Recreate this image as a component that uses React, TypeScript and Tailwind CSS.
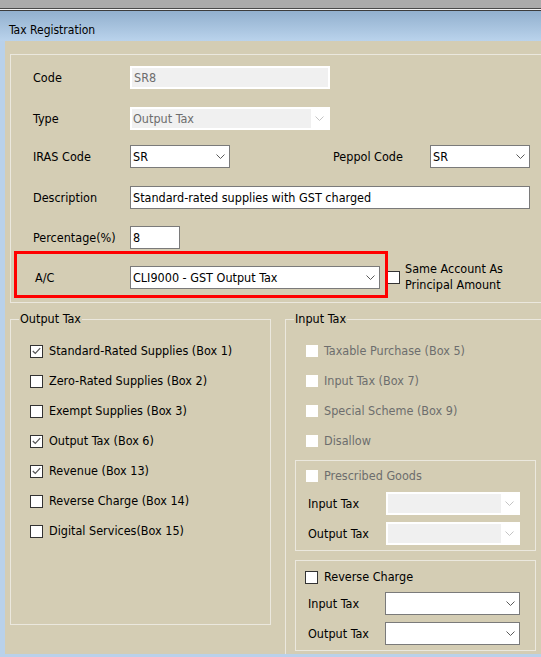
import React from "react";

const tan = "bg-[#d4cdb4]";

function Chevron({ light = false }: { light?: boolean }) {
  return (
    <svg width="9" height="5" viewBox="0 0 9 5" className="block">
      <polyline
        points="0.5,0.5 4.5,4.5 8.5,0.5"
        fill="none"
        stroke={light ? "#c4c4c4" : "#5a5a5a"}
        strokeWidth="1"
      />
    </svg>
  );
}

function Select({ value = "", w, disabled = false }: { value?: string; w: string; disabled?: boolean }) {
  if (disabled) {
    return (
      <div className={`${w} shrink-0 h-[23px] bg-white p-[2px] flex`}>
        <div className="flex-1 bg-[#f0f0f0] pl-[1px] flex items-center text-[#6d6d6d]">{value}</div>
        <div className="w-[17px] flex items-center justify-center">
          <Chevron light />
        </div>
      </div>
    );
  }
  return (
    <div className={`${w} shrink-0 h-[23px] bg-white border border-[#7a7a7a] flex items-center`}>
      <div className="flex-1 pl-[2px] text-black">{value}</div>
      <div className="w-[18px] flex items-center justify-center">
        <Chevron />
      </div>
    </div>
  );
}

function TextBox({ value, w, disabled = false }: { value: string; w: string; disabled?: boolean }) {
  return (
    <div
      className={`${w} shrink-0 h-[23px] flex items-center pl-[2px] ${
        disabled ? "bg-[#f0f0f0] border-2 border-white text-[#6d6d6d]" : "bg-white border border-[#7a7a7a] text-black"
      }`}
    >
      {value}
    </div>
  );
}

function Check({ checked = false, disabled = false }: { checked?: boolean; disabled?: boolean }) {
  if (disabled) return <div className="w-[12px] h-[12px] shrink-0 bg-white mr-[6px]" />;
  return (
    <div className="w-[13px] h-[13px] shrink-0 border border-[#333333] bg-white mr-[6px] flex items-center justify-center">
      {checked && (
        <svg width="9" height="8" viewBox="0 0 9 8">
          <polyline points="0.8,4 3.3,6.5 8.2,1.2" fill="none" stroke="#555555" strokeWidth="1.2" />
        </svg>
      )}
    </div>
  );
}

function CheckRow({ label, checked = false, disabled = false }: { label: string; checked?: boolean; disabled?: boolean }) {
  return (
    <div className="h-[30px] flex items-center whitespace-nowrap">
      <Check checked={checked} disabled={disabled} />
      <span className={disabled ? "text-[#6d6d6d]" : "text-black"}>{label}</span>
    </div>
  );
}

function Row({ label, mt, children }: { label: string; mt: string; children: React.ReactNode }) {
  return (
    <div className={`${mt} h-[23px] flex items-center`}>
      <div className="w-[97px] shrink-0">{label}</div>
      {children}
    </div>
  );
}

export default function App() {
  return (
    <div className="w-[541px] h-[657px] overflow-hidden flex flex-col bg-[#b9d1ea] font-['DejaVu_Sans_Condensed','DejaVu_Sans',sans-serif] text-[12.5px] leading-[16px] text-black">
      {/* window chrome */}
      <div className="h-[8px] shrink-0 bg-[#ababab]" />
      <div className="h-[1px] shrink-0 bg-[#4a4a4a]" />
      <div className="h-[1px] shrink-0 bg-[#f4f4f4]" />
      <div className="h-[1px] shrink-0 bg-[#3c3c3c]" />
      <div className="h-[30px] shrink-0 bg-gradient-to-b from-[#92b0ce] to-[#bad3ec] pl-[9px] pt-[11px] text-[12px]">
        Tax Registration
      </div>

      {/* body */}
      <div className={`h-[613px] shrink-0 ml-[5px] ${tan} overflow-hidden pt-[13px] pl-[5px]`}>
        {/* top frame */}
        <div className="w-[560px] h-[249px] border border-[#ebe8de] pl-[22px]">
          <Row label="Code" mt="mt-[11px]">
            <TextBox value="SR8" w="w-[200px]" disabled />
          </Row>
          <Row label="Type" mt="mt-[18px]">
            <Select value="Output Tax" w="w-[200px]" disabled />
          </Row>
          <Row label="IRAS Code" mt="mt-[15px]">
            <Select value="SR" w="w-[100px]" />
            <div className="ml-[103px] w-[97px] shrink-0">Peppol Code</div>
            <Select value="SR" w="w-[100px]" />
          </Row>
          <Row label="Description" mt="mt-[18px]">
            <TextBox value="Standard-rated supplies with GST charged" w="w-[400px]" />
          </Row>
          <Row label="Percentage(%)" mt="mt-[17px]">
            <TextBox value="8" w="w-[50px]" />
          </Row>
          <div className="mt-[2px] flex items-start">
            <div className="relative z-10 shrink-0 -ml-[19px] w-[374px] h-[47px] border-[3px] border-[#ff0000] pt-[12px] pl-[18px] flex items-start">
              <div className="w-[95px] shrink-0 h-[23px] flex items-center">A/C</div>
              <Select value="CLI9000 - GST Output Tax" w="w-[250px]" />
            </div>
            <div className="mt-[10px] -ml-[1px] flex items-center shrink-0">
              <div className="w-[13px] h-[13px] shrink-0 border border-[#333333] bg-white mr-[5px]" />
              <div className="leading-[16px] whitespace-nowrap">
                Same Account As
                <br />
                Principal Amount
              </div>
            </div>
          </div>
        </div>

        {/* lower group boxes */}
        <div className="mt-[16px] flex items-start">
          <div className="relative shrink-0 w-[261px] h-[306px] border border-[#ebe8de] pt-[16px] pl-[19px]">
            <span className={`absolute -top-[9px] left-[8px] px-[1px] ${tan}`}>Output Tax</span>
            <CheckRow label="Standard-Rated Supplies (Box 1)" checked />
            <CheckRow label="Zero-Rated Supplies (Box 2)" />
            <CheckRow label="Exempt Supplies (Box 3)" />
            <CheckRow label="Output Tax (Box 6)" checked />
            <CheckRow label="Revenue (Box 13)" checked />
            <CheckRow label="Reverse Charge (Box 14)" />
            <CheckRow label="Digital Services(Box 15)" />
          </div>

          <div className="relative shrink-0 ml-[14px] w-[270px] h-[360px] border border-[#ebe8de] pt-[16px]">
            <span className={`absolute -top-[9px] left-[8px] px-[1px] ${tan}`}>Input Tax</span>
            <div className="pl-[20px]">
              <CheckRow label="Taxable Purchase (Box 5)" disabled />
              <CheckRow label="Input Tax (Box 7)" disabled />
              <CheckRow label="Special Scheme (Box 9)" disabled />
              <CheckRow label="Disallow" disabled />
            </div>

            <div className="ml-[9px] mt-[4px] w-[241px] h-[91px] border border-[#ebe8de] pl-[10px]">
              <CheckRow label="Prescribed Goods" disabled />
              <div className="mt-[1px] h-[23px] flex items-center pl-[2px]">
                <div className="w-[78px] shrink-0">Input Tax</div>
                <Select w="w-[134px]" disabled />
              </div>
              <div className="mt-[7px] h-[23px] flex items-center pl-[2px]">
                <div className="w-[78px] shrink-0">Output Tax</div>
                <Select w="w-[134px]" disabled />
              </div>
            </div>

            <div className="ml-[9px] mt-[9px] w-[241px] h-[91px] border border-[#ebe8de] pl-[9px]">
              <div className="mt-[1px]">
                <CheckRow label="Reverse Charge" />
              </div>
              <div className="h-[23px] flex items-center pl-[3px]">
                <div className="w-[77px] shrink-0">Input Tax</div>
                <Select w="w-[135px]" />
              </div>
              <div className="mt-[7px] h-[23px] flex items-center pl-[3px]">
                <div className="w-[77px] shrink-0">Output Tax</div>
                <Select w="w-[135px]" />
              </div>
            </div>
          </div>
        </div>
      </div>
    </div>
  );
}
